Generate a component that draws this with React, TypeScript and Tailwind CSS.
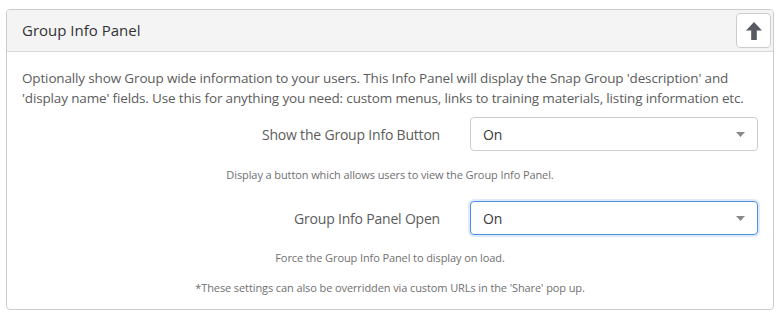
import { type ReactNode } from "react";

const font = { fontFamily: '"Open Sans", "Noto Sans", sans-serif' };

function SelectBox(props: { value: string; focused?: boolean }) {
  return (
    <div
      className={
        props.focused
          ? "w-[288px] h-[34px] flex items-center justify-between pl-[12px] pr-[12px] bg-white rounded-[4px] border border-[#4d8fe6] shadow-[0_0_0_2px_rgba(77,143,230,0.18)]"
          : "w-[288px] h-[34px] flex items-center justify-between pl-[12px] pr-[12px] bg-white rounded-[4px] border border-[#cccccc]"
      }
    >
      <span className="text-[14px] tracking-[-0.2px] text-[#3a3a3a]">{props.value}</span>
      <svg width="9" height="5" viewBox="0 0 9 5">
        <path d="M0 0 H9 L4.5 5 Z" fill="#8a8a8a" />
      </svg>
    </div>
  );
}

function FormRow(props: { label: string; children: ReactNode; className?: string }) {
  return (
    <div className={"flex items-center " + (props.className ?? "")}>
      <div className="flex-1 text-right pr-[30px] text-[14px] tracking-[-0.2px] text-[#5c5c5c]">{props.label}</div>
      {props.children}
    </div>
  );
}

function HelpText(props: { children: ReactNode; className?: string }) {
  return (
    <p className={"text-center text-[11px] leading-[16px] tracking-[-0.1px] text-[#707070] " + (props.className ?? "")}>
      {props.children}
    </p>
  );
}

export default function App() {
  return (
    <div className="w-[782px] h-[321px] bg-white pt-[9px] pl-[6px]" style={font}>
      <div className="w-[768px] border border-[#cccccc] rounded-[4px] overflow-hidden">
        <div className="h-[42px] flex items-center justify-between pl-[15px] pr-[2px] bg-[#f4f4f4] border-b border-[#d8d8d8]">
          <span className="text-[15px] text-[#333]">Group Info Panel</span>
          <button
            type="button"
            className="w-[35px] h-[35px] flex items-center justify-center bg-white border border-[#cccccc] rounded-[4px]"
          >
            <svg width="16" height="18" viewBox="0 0 16 18">
              <path d="M8 0 L16 8.5 H10.8 V18 H5.2 V8.5 H0 Z" fill="#555b60" />
            </svg>
          </button>
        </div>

        <div className="pt-[16px] pb-[13px] px-[15px]">
          <p className="text-[13.5px] leading-[20px] tracking-[-0.15px] text-[#5c5c5c]">
            Optionally show Group wide information to your users. This Info Panel will display the Snap Group
            'description' and 'display name' fields. Use this for anything you need: custom menus, links to training
            materials, listing information etc.
          </p>

          <FormRow label="Show the Group Info Button" className="mt-[9px]">
            <SelectBox value="On" />
          </FormRow>
          <HelpText className="mt-[16px]">Display a button which allows users to view the Group Info Panel.</HelpText>

          <FormRow label="Group Info Panel Open" className="mt-[18px]">
            <SelectBox value="On" focused />
          </FormRow>
          <HelpText className="mt-[15px]">Force the Group Info Panel to display on load.</HelpText>

          <HelpText className="mt-[14px]">
            *These settings can also be overridden via custom URLs in the 'Share' pop up.
          </HelpText>
        </div>
      </div>
    </div>
  );
}
